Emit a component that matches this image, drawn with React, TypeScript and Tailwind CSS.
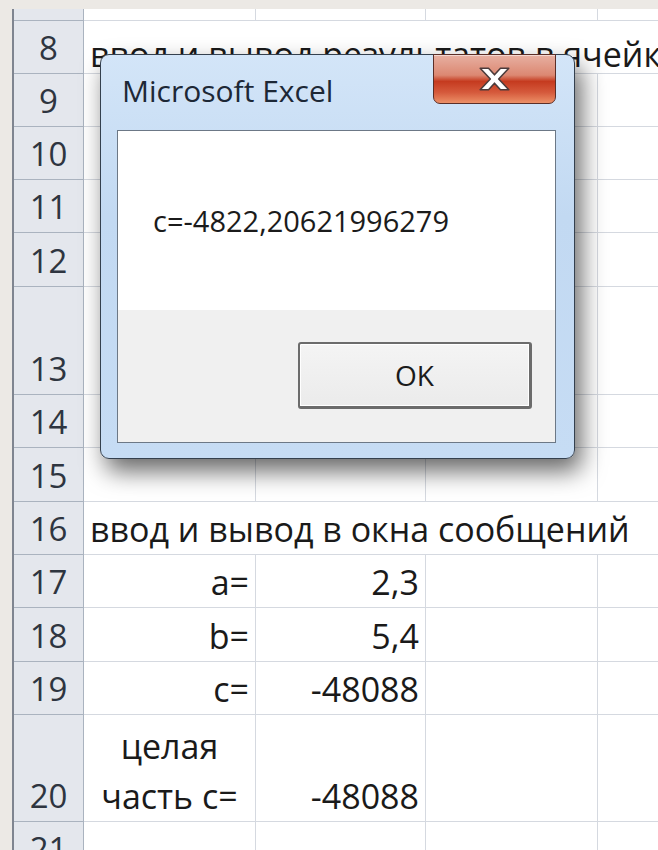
import React from 'react';

type Row = {
  n: string;
  h: string;
  span?: string;
  spanLeading?: string;
  a?: string[];
  b?: string;
};

// Rows 7..21 of the sheet; row 7 is only its bottom sliver
const rows: Row[] = [
  { n: '', h: 'h-[12px]' },
  { n: '8', h: 'h-[53px]', span: 'ввод и вывод результатов в ячейку', spanLeading: 'leading-[38px]' },
  { n: '9', h: 'h-[53px]' },
  { n: '10', h: 'h-[53px]' },
  { n: '11', h: 'h-[53px]' },
  { n: '12', h: 'h-[54px]' },
  { n: '13', h: 'h-[108px]' },
  { n: '14', h: 'h-[53px]' },
  { n: '15', h: 'h-[54px]' },
  { n: '16', h: 'h-[53px]', span: 'ввод и вывод в окна сообщений' },
  { n: '17', h: 'h-[53px]', a: ['a='], b: '2,3' },
  { n: '18', h: 'h-[54px]', a: ['b='], b: '5,4' },
  { n: '19', h: 'h-[53px]', a: ['c='], b: '-48088' },
  { n: '20', h: 'h-[107px]', a: ['целая', 'часть с='], b: '-48088' },
  { n: '21', h: 'h-[53px]' },
];

const cell = 'flex items-end border-b border-[#d5d9e0] shrink-0';

function SheetRow({ row }: { row: Row }) {
  return (
    <div className={`flex ${row.h}`}>
      <div className="flex items-end justify-center w-[70px] shrink-0 bg-[#e4e7ed] border-b border-r border-[#aab3bf] text-[33px] text-[#2e3540]">
        <span className="leading-[50px]">{row.n}</span>
      </div>
      {row.span ? (
        <div className="flex items-end flex-1 border-b border-[#d5d9e0] pl-[6px] whitespace-nowrap overflow-hidden">
          <span className={row.spanLeading ?? 'leading-[50px]'}>{row.span}</span>
        </div>
      ) : (
        <>
          <div className={`${cell} w-[172px] border-r ${row.a && row.a.length > 1 ? 'justify-center' : 'justify-end pr-[6px]'}`}>
            {row.a && (
              <div className={`leading-[50px] ${row.a.length > 1 ? 'text-center' : 'text-right'}`}>
                {row.a.map((t) => (
                  <div key={t}>{t}</div>
                ))}
              </div>
            )}
          </div>
          <div className={`${cell} w-[170px] border-r justify-end pr-[6px]`}>
            {row.b && <span className="leading-[50px]">{row.b}</span>}
          </div>
          <div className={`${cell} w-[172px] border-r`} />
          <div className={`${cell} flex-1`} />
        </>
      )}
    </div>
  );
}

function CloseGlyph() {
  return (
    <svg width="31" height="24" viewBox="0 0 26 20">
      <polygon
        points="1,1 8,1 13,6.5 18,1 25,1 16.5,10 25,19 18,19 13,13.5 8,19 1,19 9.5,10"
        fill="#ffffff"
        stroke="#4b3b3b"
        strokeWidth="1.3"
        strokeLinejoin="round"
      />
    </svg>
  );
}

function MessageBox() {
  return (
    <div className="absolute left-[100px] top-[54px] w-[475px] h-[405px] flex flex-col rounded-[9px] border border-[#34404e] bg-[linear-gradient(to_bottom,#d3e5f8,#c2d9f2_40%,#c6dcf4)] shadow-[6px_12px_24px_rgba(0,0,0,0.6)] font-['Open_Sans',sans-serif]">
      <div className="relative h-[75px] shrink-0 pl-[21px] pt-[16px]">
        <span className="text-[30px] leading-[40px] text-[#1d2836]">Microsoft Excel</span>
        <div className="absolute right-[18px] top-[-1px] w-[123px] h-[50px] flex items-center justify-center rounded-b-[7px] border border-[#5b2e27] bg-[linear-gradient(to_bottom,#e7b0a2_0%,#dc8872_42%,#c53a1f_55%,#d55a3c_78%,#ec9067_100%)] shadow-[inset_0_1px_0_rgba(255,255,255,0.5)]">
          <CloseGlyph />
        </div>
      </div>
      <div className="flex-1 flex flex-col ml-[16px] mr-[18px] mb-[15px] border border-[#6c7886]">
        <div className="h-[179px] shrink-0 flex items-center bg-white pl-[35px]">
          <span className="text-[29px] text-[#1b1b1b]">c=-4822,20621996279</span>
        </div>
        <div className="flex-1 flex justify-end items-start bg-[#f0f0f0] pt-[32px] pr-[23px]">
          <div className="w-[234px] h-[67px] flex items-center justify-center rounded-[3px] border-2 border-b-[3px] border-r-[3px] border-[#6b6b6b] bg-[linear-gradient(to_bottom,#f4f4f4,#ebebeb)] shadow-[inset_0_0_0_1px_#ffffff] text-[28px] text-[#1b1b1b]">
            OK
          </div>
        </div>
      </div>
    </div>
  );
}

export default function App() {
  return (
    <div className="relative w-[658px] h-[850px] overflow-hidden bg-[#ece9e5] pt-[9px] pl-[12px]">
      <div className="border-l-2 border-[#7f8590] bg-white text-[34px] text-[#1a1a1a] font-['Open_Sans',sans-serif]">
        {rows.map((r, i) => (
          <SheetRow key={i} row={r} />
        ))}
      </div>
      <MessageBox />
    </div>
  );
}
